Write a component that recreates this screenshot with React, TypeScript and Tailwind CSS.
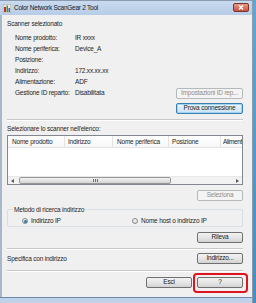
const FONT = "font-['Liberation_Sans',Arial,sans-serif]";

function Btn({
  label,
  w,
  disabled,
  focus,
}: {
  label: string;
  w: string;
  disabled?: boolean;
  focus?: boolean;
}) {
  const base = "h-[11px] flex items-center justify-center rounded-[2px] border text-[6.5px] leading-none tracking-[-0.2px]";
  if (disabled)
    return <div className={`${base} ${w} border-[#b5b9bc] bg-[#f4f4f4] text-[#8d8d8d]`}>{label}</div>;
  if (focus)
    return (
      <div className={`${base} ${w} border-[#3c7fb1] bg-gradient-to-b from-[#eaf6fd] to-[#c9e4f5] text-[#1a1a1a] shadow-[inset_0_0_0_1px_#9fd5f3]`}>
        {label}
      </div>
    );
  return (
    <div className={`${base} ${w} border-[#707070] bg-gradient-to-b from-[#f2f2f2] via-[#e6e6e6] to-[#d2d2d2] text-[#1a1a1a]`}>
      {label}
    </div>
  );
}

function Radio({ on }: { on?: boolean }) {
  return (
    <div className="w-[6px] h-[6px] rounded-full border border-[#8a8a8a] bg-gradient-to-b from-[#f4f4f4] to-[#dcdcdc] flex items-center justify-center">
      {on && <div className="w-[3px] h-[3px] rounded-full bg-[#2c77b5]" />}
    </div>
  );
}

const INFO = [
  ["Nome prodotto:", "IR xxxx"],
  ["Nome periferica:", "Device_A"],
  ["Posizione:", ""],
  ["Indirizzo:", "172.xx.xx.xx"],
  ["Alimentazione:", "ADF"],
  ["Gestione ID reparto:", "Disabilitata"],
];

const COLS: [string, string][] = [
  ["Nome prodotto", "w-[57px] pl-[4px]"],
  ["Indirizzo", "w-[48px] pl-[3px]"],
  ["Nome periferica", "w-[56px] pl-[4px]"],
  ["Posizione", "w-[52px] pl-[3px]"],
];

function Sep() {
  return <div className="h-[2px] border-t border-[#c8c8c8] border-b border-b-white" />;
}

export default function App() {
  return (
    <div className={`relative w-[256px] h-[303px] overflow-hidden flex bg-[#f0f0f0] text-[#1e1e1e] ${FONT}`}>
      <div className="w-[252px] flex flex-col">
        {/* title bar */}
        <div className="h-[15px] flex items-center border-t border-[#8c9cb0] bg-gradient-to-b from-[#c9daef] to-[#b7cce7] pl-[3px] pr-[3px]">
          <svg width="8" height="9" viewBox="0 0 8 9">
            <rect x="0" y="0" width="8" height="9" fill="#e8e8e8" stroke="#7a7a7a" strokeWidth="0.6" />
            <rect x="1" y="3" width="2" height="5" fill="#d22" />
            <rect x="3.5" y="1.5" width="1.5" height="6.5" fill="#2a2" />
            <rect x="5.5" y="4" width="1.5" height="4" fill="#36c" />
          </svg>
          <span className="ml-[3px] text-[6.5px] tracking-[-0.25px] text-[#1a1a1a]">Color Network ScanGear 2 Tool</span>
          <div className="ml-auto mt-[-2px] w-[16px] h-[9px] rounded-[2px] border border-[#7b352a] bg-gradient-to-b from-[#e79a88] to-[#c9513d] flex items-center justify-center">
            <svg width="6" height="5" viewBox="0 0 6 5">
              <path d="M1 0.5 L5 4.5 M5 0.5 L1 4.5" stroke="#fff" strokeWidth="1.4" />
            </svg>
          </div>
        </div>

        {/* body */}
        <div className="flex-1 flex flex-col border-l-2 border-[#a9b8c9] pl-[5px] pr-[9px] text-[6.5px] tracking-[-0.2px]">
          <div className="mt-[3px] h-[11px] leading-[11px]">Scanner selezionato</div>
          <div className="mt-[3px] flex">
            <div className="flex-1 pl-[8px]">
              {INFO.map(([k, v]) => (
                <div key={k} className="h-[11px] leading-[11px] flex">
                  <span className="w-[60px]">{k}</span>
                  <span>{v}</span>
                </div>
              ))}
            </div>
            <div className="mt-[56px] flex flex-col gap-[4px]">
              <Btn label="Impostazioni ID rep..." w="w-[67px]" disabled />
              <Btn label="Prova connessione" w="w-[67px]" focus />
            </div>
          </div>

          <div className="mt-[5px]">
            <Sep />
          </div>
          <div className="mt-[2px] h-[11px] leading-[11px]">Selezionare lo scanner nell'elenco:</div>

          <div className="mt-[1px] h-[50px] border border-[#828790] bg-white flex flex-col overflow-hidden">
            <div className="h-[12px] flex border-b border-[#e3e3e3] bg-gradient-to-b from-white to-[#f6f7f8]">
              {COLS.map(([c, w]) => (
                <div key={c} className={`${w} shrink-0 h-full leading-[12px] border-r border-[#e3e3e3] whitespace-nowrap overflow-hidden`}>
                  {c}
                </div>
              ))}
              <div className="flex-1 h-full pl-[2px] leading-[12px] tracking-[-0.4px] whitespace-nowrap">Aliment</div>
            </div>
            <div className="flex-1" />
            <div className="h-[8px] flex items-center bg-[#f2f2f2] border-t border-[#e8e8e8]">
              <div className="w-[9px] h-full flex items-center justify-center">
                <svg width="3" height="4" viewBox="0 0 3 4"><path d="M3 0 L0 2 L3 4 Z" fill="#5a5a5a" /></svg>
              </div>
              <div className="ml-[2px] w-[152px] h-[7px] rounded-[2px] border border-[#979797] bg-gradient-to-b from-[#f3f3f3] to-[#d4d4d4] flex items-center justify-center gap-[1px]">
                <div className="w-px h-[3px] bg-[#6f6f6f]" />
                <div className="w-px h-[3px] bg-[#6f6f6f]" />
                <div className="w-px h-[3px] bg-[#6f6f6f]" />
              </div>
              <div className="flex-1" />
              <div className="w-[9px] h-full flex items-center justify-center">
                <svg width="3" height="4" viewBox="0 0 3 4"><path d="M0 0 L3 2 L0 4 Z" fill="#5a5a5a" /></svg>
              </div>
            </div>
          </div>

          <div className="mt-[5px] flex justify-end">
            <Btn label="Seleziona" w="w-[46px]" disabled />
          </div>

          <div className="relative mt-[8px] h-[18px] rounded-[2px] border border-[#d5dfe5] pt-[6px] flex items-center">
            <span className="absolute left-[5px] top-[-5px] px-[1px] bg-[#f0f0f0] leading-[9px]">Metodo di ricerca indirizzo</span>
            <div className="flex items-center pl-[14px] w-[124px]">
              <Radio on />
              <span className="ml-[3px]">Indirizzo IP</span>
            </div>
            <div className="flex items-center">
              <Radio />
              <span className="ml-[3px]">Nome host o indirizzo IP</span>
            </div>
          </div>

          <div className="mt-[5px] flex justify-end">
            <Btn label="Rileva" w="w-[46px]" />
          </div>

          <div className="mt-[5px]">
            <Sep />
          </div>
          <div className="mt-[3px] flex items-center justify-between">
            <span>Specifica con indirizzo</span>
            <Btn label="Indirizzo..." w="w-[46px]" />
          </div>

          <div className="mt-[6px]">
            <Sep />
          </div>
          <div className="mt-[5px] flex justify-end gap-[5px]">
            <Btn label="Esci" w="w-[46px]" />
            <Btn label="?" w="w-[46px]" />
          </div>
        </div>

        <div className="h-[6px] border-t border-[#6d8aab] bg-[#bfd2e9]" />
      </div>
      <div className="w-[4px] border-l border-[#8e9aa8] bg-gradient-to-b from-[#5aa9dc] to-[#3e8fc9]" />

      <div className="absolute left-[193px] top-[273px] w-[55px] h-[20px] rounded-[4px] border-2 border-[#e0141e]" />
    </div>
  );
}
